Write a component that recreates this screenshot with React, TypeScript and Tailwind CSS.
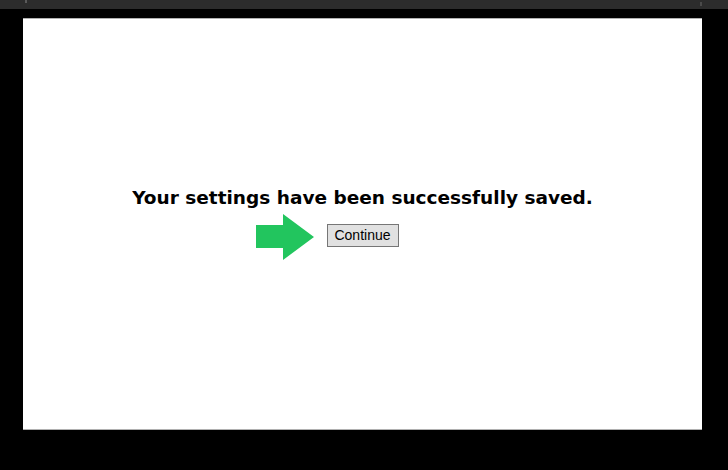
export default function App() {
  return (
    <div className="w-[728px] h-[470px] bg-black flex flex-col overflow-hidden">
      <div className="h-[9px] bg-[#2c2c2c] shrink-0 relative">
        <div className="absolute left-[25px] top-0 w-[2px] h-[3px] bg-[#5a5a5a]" />
        <div className="absolute left-[700px] top-[2px] w-[2px] h-[4px] bg-[#4a4a4a]" />
      </div>
      <div className="pt-[9px] pl-[23px]">
        <div className="w-[679px] h-[412px] bg-white border-t border-b border-[#b0b0b0] flex flex-col items-center">
          <h1
            className="mt-[167px] text-[18.5px] font-bold text-black leading-[24px]"
            style={{ fontFamily: '"DejaVu Sans", Verdana, sans-serif' }}
          >
            Your settings have been successfully saved.
          </h1>
          <div className="relative mt-[12px]">
            <svg
              className="absolute left-[-72px] top-[-8px]"
              width="60"
              height="46"
              viewBox="0 0 60 46"
            >
              <polygon points="1,11 28,11 28,0 59,23 28,46 28,34 1,34" fill="#22c55e" />
            </svg>
            <button
              className="w-[72px] h-[23px] bg-[#e1e1e1] border border-[#767676] text-[14px] text-black leading-none"
              style={{ fontFamily: '"Liberation Sans", Arial, sans-serif' }}
            >
              Continue
            </button>
          </div>
        </div>
      </div>
    </div>
  );
}
